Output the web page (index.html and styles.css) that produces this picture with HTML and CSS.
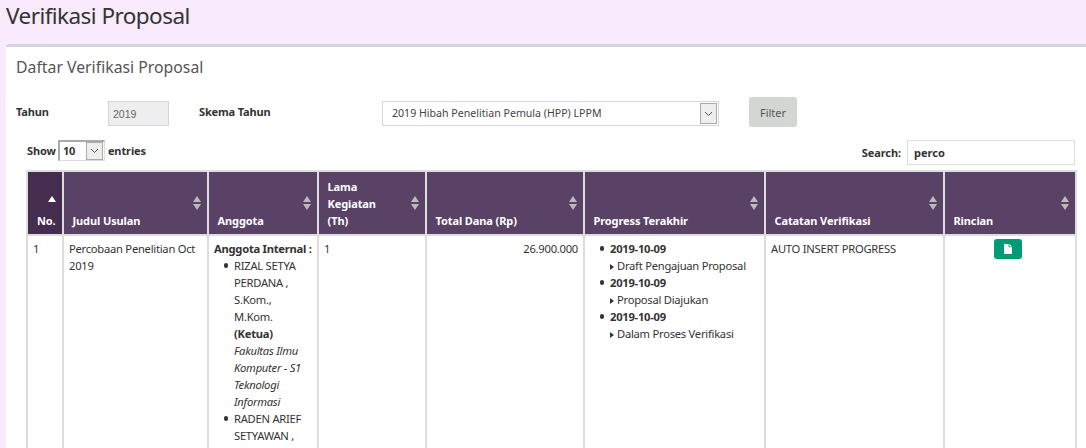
FILE: index.html
```html
<!DOCTYPE html>
<html lang="en">
<head>
    <meta charset="UTF-8">
    <title>Verifikasi Proposal</title>
    <link rel="stylesheet" href="styles.css">
</head>
<body>
    <h1 class="page-title">Verifikasi Proposal</h1>
    <div class="box">
        <h2 class="box-title">Daftar Verifikasi Proposal</h2>

        <!-- Filter form -->
        <div class="filter-row">
            <label class="label-tahun">Tahun</label>
            <input class="input-tahun" type="text" value="2019" disabled>
            <label class="label-skema">Skema Tahun</label>
            <div class="fake-select skema-select">
                <span class="fake-select-text">2019 Hibah Penelitian Pemula (HPP) LPPM</span>
                <span class="fake-select-arrow">
                    <svg width="9" height="6" viewBox="0 0 9 6"><path d="M1 1l3.5 3.5L8 1" fill="none" stroke="#555" stroke-width="1"/></svg>
                </span>
            </div>
            <button class="btn-filter">Filter</button>
        </div>

        <!-- Table controls -->
        <div class="table-controls">
            <div class="show-entries">
                <span>Show</span>
                <div class="fake-select length-select">
                    <span class="fake-select-text">10</span>
                    <span class="fake-select-arrow">
                        <svg width="9" height="6" viewBox="0 0 9 6"><path d="M1 1l3.5 3.5L8 1" fill="none" stroke="#555" stroke-width="1"/></svg>
                    </span>
                </div>
                <span>entries</span>
            </div>
            <div class="search-box">
                <span>Search:</span>
                <input class="search-input" type="text" value="perco">
            </div>
        </div>

        <table class="data-table">
            <colgroup>
                <col class="col-no">
                <col class="col-judul">
                <col class="col-anggota">
                <col class="col-lama">
                <col class="col-dana">
                <col class="col-progress">
                <col class="col-catatan">
                <col class="col-rincian">
            </colgroup>
            <thead>
                <tr>
                    <th class="sorted">No.</th>
                    <th class="sortable">Judul Usulan</th>
                    <th class="sortable">Anggota</th>
                    <th class="sortable">Lama<br>Kegiatan<br>(Th)</th>
                    <th class="sortable">Total Dana (Rp)</th>
                    <th class="sortable">Progress Terakhir</th>
                    <th class="sortable">Catatan Verifikasi</th>
                    <th class="sortable">Rincian</th>
                </tr>
            </thead>
            <tbody>
                <tr>
                    <td>1</td>
                    <td>Percobaan Penelitian Oct 2019</td>
                    <td>
                        <b class="member-head">Anggota Internal :</b>
                        <ul class="member-list">
                            <li>RIZAL SETYA PERDANA , S.Kom., M.Kom. <b>(Ketua)</b><br><i>Fakultas Ilmu Komputer - S1 Teknologi Informasi</i></li>
                            <li>RADEN ARIEF SETYAWAN ,</li>
                        </ul>
                    </td>
                    <td>1</td>
                    <td class="money">26.900.000</td>
                    <td>
                        <ul class="progress-list">
                            <li><b>2019-10-09</b><br><span class="caret"></span>Draft Pengajuan Proposal</li>
                            <li><b>2019-10-09</b><br><span class="caret"></span>Proposal Diajukan</li>
                            <li><b>2019-10-09</b><br><span class="caret"></span>Dalam Proses Verifikasi</li>
                        </ul>
                    </td>
                    <td>AUTO INSERT PROGRESS</td>
                    <td class="action-cell">
                        <button class="btn-detail">
                            <svg width="8" height="10" viewBox="0 0 8 10"><path d="M0 0h4.6v3.2H8V10H0z" fill="#fff"/><path d="M5.4 0L8 2.5H5.4z" fill="#fff"/></svg>
                        </button>
                    </td>
                </tr>
            </tbody>
        </table>
    </div>
</body>
</html>
```

FILE: styles.css
```css
html, body {
    height: 100%;
    overflow: hidden;
}

body {
    margin: 0;
    padding: 0 0 0 6px;
    background-color: #f9ebfd;
    color: #333;
    font-family: "Noto Sans", "Open Sans", sans-serif;
    font-size: 11.2px;
    line-height: 17px;
    letter-spacing: -0.25px;
}

.page-title {
    margin: 0;
    height: 44px;
    padding-top: 1px;
    box-sizing: border-box;
    font-size: 22.5px;
    line-height: 30px;
    font-weight: 400;
    color: #333;
    letter-spacing: -0.55px;
}

.box {
    background-color: #fff;
    border-top: 3px solid #d2d6de;
    border-top-left-radius: 3px;
    height: 401px;
    overflow: hidden;
    padding: 0 10px;
}

.box-title {
    margin: 0;
    padding-top: 9px;
    height: 51px;
    box-sizing: border-box;
    font-size: 15.8px;
    line-height: 22px;
    font-weight: 400;
    color: #555;
    letter-spacing: 0;
}

/* Filter form */
.filter-row {
    display: flex;
    align-items: flex-start;
    height: 43px;
    margin-top: -1px;
}

.filter-row label {
    font-weight: 700;
    margin-top: 6px;
    font-size: 11px;
    letter-spacing: -0.15px;
}

.label-tahun {
    width: 92px;
}

.input-tahun {
    width: 61px;
    height: 25px;
    margin-top: 4px;
    box-sizing: border-box;
    border: 1px solid #d2d6de;
    background-color: #eee;
    color: #666;
    padding: 0 4px;
    font-family: "Liberation Sans", sans-serif;
    font-size: 10.5px;
    letter-spacing: 0;
}

.label-skema {
    width: 183px;
    margin-left: 30px;
}

.fake-select {
    display: flex;
    align-items: center;
    justify-content: space-between;
    box-sizing: border-box;
    background-color: #fff;
}

.skema-select {
    width: 337px;
    height: 25px;
    margin-top: 4px;
    border: 1px solid #d2d6de;
    padding: 1px 1px 1px 9px;
}

.skema-select .fake-select-text {
    font-size: 10.6px;
    color: #444;
    letter-spacing: 0;
}

.fake-select-arrow {
    display: flex;
    align-items: center;
    justify-content: center;
    box-sizing: border-box;
    width: 17px;
    height: 100%;
    background-color: #eee;
    border: 1px solid #aaa;
}

.btn-filter {
    width: 48px;
    height: 30px;
    margin-left: 30px;
    border: 0;
    border-radius: 3px;
    background-color: #d3d7d4;
    color: #555;
    font-family: inherit;
    font-size: 11px;
    padding: 0;
}

/* Show / search row */
.table-controls {
    display: flex;
    justify-content: space-between;
    align-items: flex-start;
    height: 30px;
    padding: 0 1px 0 11px;
    font-size: 11px;
    font-weight: 700;
    letter-spacing: -0.1px;
}

.show-entries {
    display: flex;
    align-items: center;
    gap: 2px;
    height: 20px;
}

.length-select {
    width: 47px;
    height: 21px;
    margin-right: 1px;
    border: 1px solid #aaa;
    border-top-width: 2px;
    border-left-width: 2px;
    border-right-color: #ddd;
    border-bottom-color: #ddd;
    padding: 0 1px 0 3px;
}

.search-box {
    display: flex;
    align-items: center;
    gap: 6px;
    height: 25px;
}

.search-input {
    width: 168px;
    height: 25px;
    box-sizing: border-box;
    border: 1px solid #ddd;
    padding: 0 6px;
    color: #333;
    font-family: inherit;
    font-size: 11px;
    font-weight: 700;
    outline: none;
}

/* Table */
.data-table {
    width: 1049px;
    margin-left: 10px;
    table-layout: fixed;
    border-collapse: collapse;
    border: 2px solid #ddd;
}

.col-no { width: 36px; }
.col-judul { width: 145px; }
.col-anggota { width: 110px; }
.col-lama { width: 108px; }
.col-dana { width: 158px; }
.col-progress { width: 181px; }
.col-catatan { width: 179px; }
.col-rincian { width: 132px; }

.data-table th {
    position: relative;
    height: 64px;
    box-sizing: border-box;
    padding: 6px 24px 5px 8.5px;
    border: 2px solid #ddd;
    background-color: #594266;
    color: #fff;
    text-align: left;
    vertical-align: bottom;
    font-size: 11px;
    font-weight: 700;
    letter-spacing: -0.1px;
}

.data-table th.sorted {
    background-color: #452d4f;
    padding-left: 9px;
    padding-right: 0;
}

.data-table th.sorted::after {
    content: '';
    position: absolute;
    right: 6px;
    top: 24px;
    border-left: 4px solid transparent;
    border-right: 4px solid transparent;
    border-bottom: 6px solid #fff;
}

/* Grey double arrow of the sortable columns */
.data-table th.sortable::before,
.data-table th.sortable::after {
    content: '';
    position: absolute;
    right: 6px;
    border-left: 4px solid transparent;
    border-right: 4px solid transparent;
}

.data-table th.sortable::before {
    top: 24px;
    border-bottom: 6px solid #bbb;
}

.data-table th.sortable::after {
    top: 32px;
    border-top: 6px solid #bbb;
}

.data-table td {
    padding: 4px 5px;
    border: 2px solid #ddd;
    vertical-align: top;
}

.data-table td.money {
    text-align: right;
}

.member-head {
    white-space: nowrap;
}

.member-list,
.progress-list {
    margin: 0;
    padding-left: 20px;
    list-style: none;
}

.member-list li,
.progress-list li {
    position: relative;
}

.member-list li::before,
.progress-list li::before {
    content: '';
    position: absolute;
    left: -10.5px;
    top: 6px;
    width: 4.5px;
    height: 4.5px;
    border-radius: 50%;
    background-color: #333;
}

.caret {
    display: inline-block;
    margin-right: 3px;
    border-top: 3.5px solid transparent;
    border-bottom: 3.5px solid transparent;
    border-left: 4px solid #333;
}

.data-table td.action-cell {
    padding-right: 10px;
    text-align: center;
}

.btn-detail {
    display: block;
    width: 28px;
    height: 20px;
    margin: -1px auto 0;
    padding: 0;
    border: 0;
    border-radius: 3px;
    background-color: #009a75;
}
```
